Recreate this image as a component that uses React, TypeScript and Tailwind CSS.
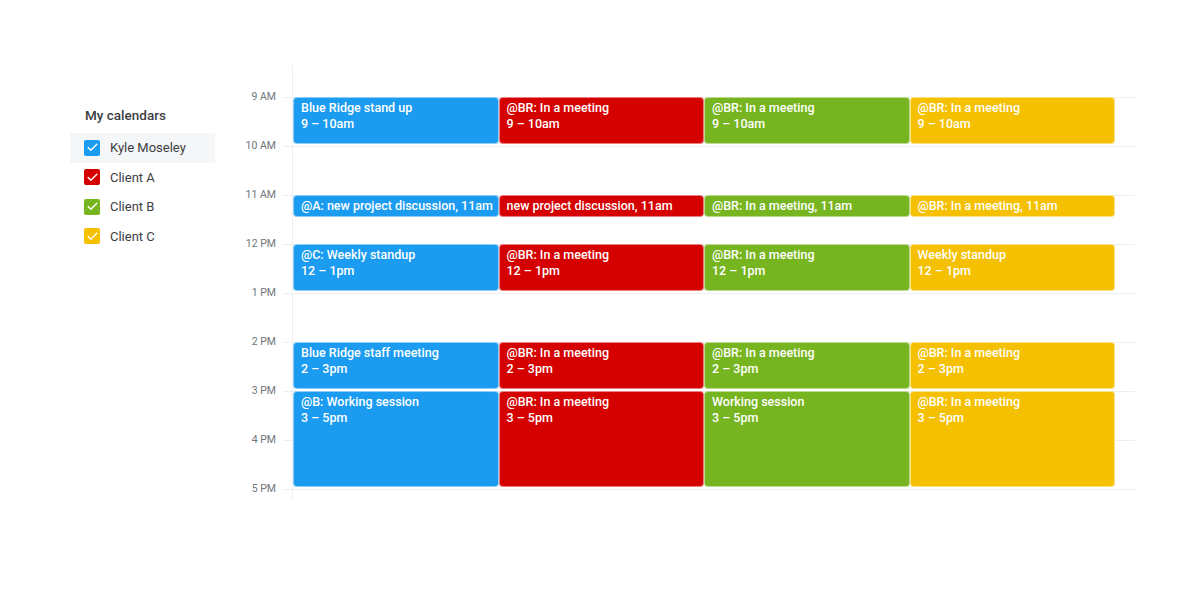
import { Check } from "lucide-react";

type CalEvent = { title: string; time?: string; start: number; end: number; compact?: boolean };

const calendars = [
  { name: "Kyle Moseley", color: "bg-[#1b9cf0]", active: true },
  { name: "Client A", color: "bg-[#d50000]", active: false },
  { name: "Client B", color: "bg-[#76b51f]", active: false },
  { name: "Client C", color: "bg-[#f4c000]", active: false },
];

const hours = ["9 AM", "10 AM", "11 AM", "12 PM", "1 PM", "2 PM", "3 PM", "4 PM", "5 PM"];

const HOUR = 49;

const columns: { color: string; events: CalEvent[] }[] = [
  {
    color: "bg-[#1b9cf0]",
    events: [
      { title: "Blue Ridge stand up", time: "9 – 10am", start: 9, end: 10 },
      { title: "@A: new project discussion, 11am", start: 11, end: 11.5, compact: true },
      { title: "@C: Weekly standup", time: "12 – 1pm", start: 12, end: 13 },
      { title: "Blue Ridge staff meeting", time: "2 – 3pm", start: 14, end: 15 },
      { title: "@B: Working session", time: "3 – 5pm", start: 15, end: 17 },
    ],
  },
  {
    color: "bg-[#d50000]",
    events: [
      { title: "@BR: In a meeting", time: "9 – 10am", start: 9, end: 10 },
      { title: "new project discussion, 11am", start: 11, end: 11.5, compact: true },
      { title: "@BR: In a meeting", time: "12 – 1pm", start: 12, end: 13 },
      { title: "@BR: In a meeting", time: "2 – 3pm", start: 14, end: 15 },
      { title: "@BR: In a meeting", time: "3 – 5pm", start: 15, end: 17 },
    ],
  },
  {
    color: "bg-[#76b51f]",
    events: [
      { title: "@BR: In a meeting", time: "9 – 10am", start: 9, end: 10 },
      { title: "@BR: In a meeting, 11am", start: 11, end: 11.5, compact: true },
      { title: "@BR: In a meeting", time: "12 – 1pm", start: 12, end: 13 },
      { title: "@BR: In a meeting", time: "2 – 3pm", start: 14, end: 15 },
      { title: "Working session", time: "3 – 5pm", start: 15, end: 17 },
    ],
  },
  {
    color: "bg-[#f4c000]",
    events: [
      { title: "@BR: In a meeting", time: "9 – 10am", start: 9, end: 10 },
      { title: "@BR: In a meeting, 11am", start: 11, end: 11.5, compact: true },
      { title: "Weekly standup", time: "12 – 1pm", start: 12, end: 13 },
      { title: "@BR: In a meeting", time: "2 – 3pm", start: 14, end: 15 },
      { title: "@BR: In a meeting", time: "3 – 5pm", start: 15, end: 17 },
    ],
  },
];

function EventBlock({ ev, color }: { ev: CalEvent; color: string }) {
  const top = (ev.start - 9) * HOUR;
  const height = ev.compact ? 22 : (ev.end - ev.start) * HOUR - 2;
  return (
    <div
      className={`absolute left-0 right-0 ${color} rounded-[4px] border border-white/50 px-[7px] pt-[2px] text-white text-[12.5px] leading-[16px] font-medium overflow-hidden whitespace-nowrap`}
      style={{ top, height }}
    >
      <div>{ev.title}</div>
      {ev.time && <div>{ev.time}</div>}
    </div>
  );
}

export default function App() {
  return (
    <div className="w-[1200px] h-[600px] bg-white flex font-['Roboto',sans-serif] text-[#3c4043]">
      {/* sidebar */}
      <div className="w-[215px] pl-[70px] pt-[105px] shrink-0">
        <div className="pl-[15px] text-[13.5px] leading-[20px] font-medium mb-[8px]">My calendars</div>
        {calendars.map((c) => (
          <div
            key={c.name}
            className={`h-[29.5px] flex items-center pl-[14px] gap-[10px] ${c.active ? "bg-[#f5f6f7]" : ""}`}
          >
            <span className={`w-[16px] h-[16px] rounded-[2px] ${c.color} flex items-center justify-center`}>
              <Check className="w-[13px] h-[13px] text-white" strokeWidth={2.6} />
            </span>
            <span className="text-[13px]">{c.name}</span>
          </div>
        ))}
      </div>

      {/* time gutter */}
      <div className="w-[68px] shrink-0 pt-[90px] pr-[7px]">
        {hours.map((h) => (
          <div key={h} className="h-[49px] text-right text-[10.5px] leading-[14px] text-[#70757a]">
            {h}
          </div>
        ))}
      </div>

      {/* grid */}
      <div className="w-[852px] shrink-0 pt-[65px]">
        <div className="relative h-[435px]">
          <div className="absolute left-[9px] top-0 bottom-0 w-px bg-[#eceef0]" />
          <div className="pt-[32px]">
            {hours.map((h) => (
              <div key={h} className="h-[49px] border-t border-[#eceef0]" />
            ))}
          </div>
          <div className="absolute left-[10px] top-[32px] w-[822px] grid grid-cols-4">
            {columns.map((col, i) => (
              <div key={i} className="relative h-[392px]">
                {col.events.map((ev, j) => (
                  <EventBlock key={j} ev={ev} color={col.color} />
                ))}
              </div>
            ))}
          </div>
        </div>
      </div>
    </div>
  );
}
